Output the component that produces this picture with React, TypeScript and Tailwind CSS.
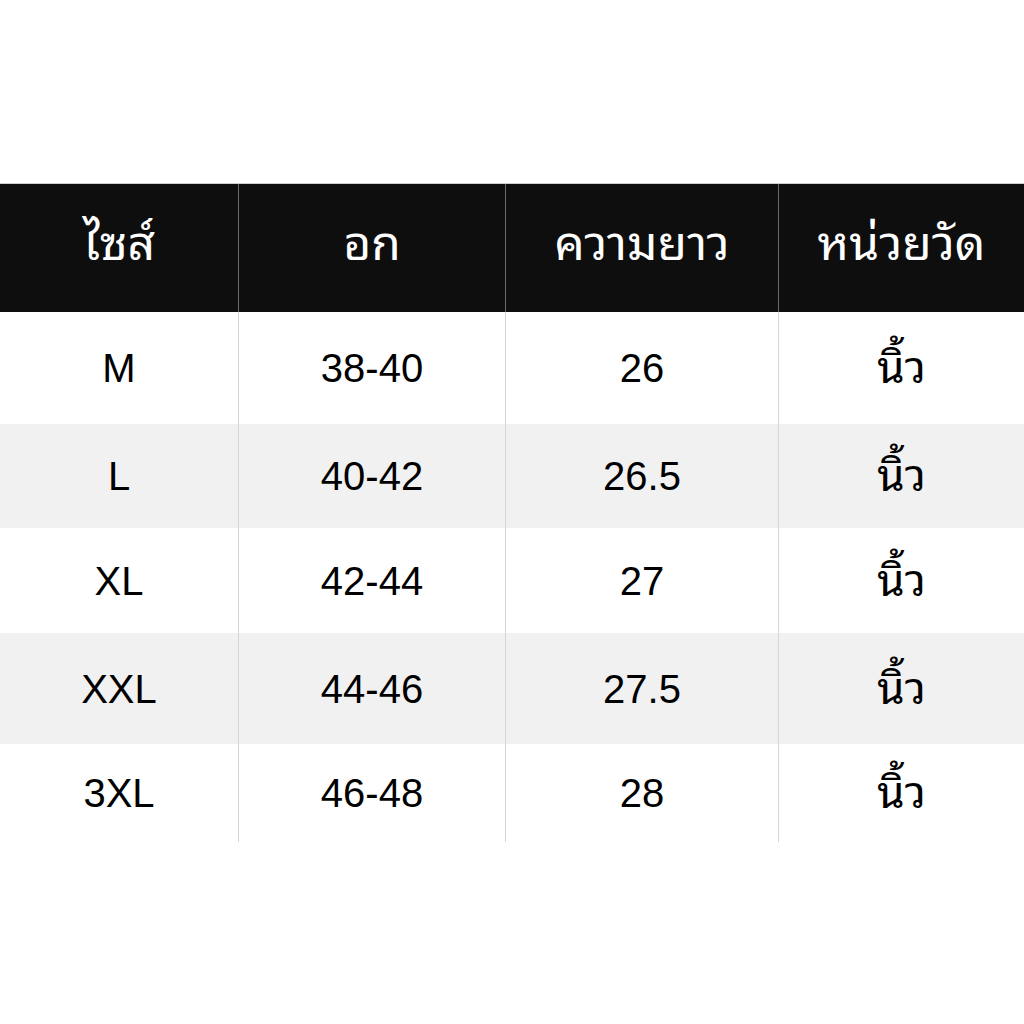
import React from "react";

const rows = [
  { size: "M", chest: "38-40", len: "26", h: "h-[112px]", bg: "bg-white" },
  { size: "L", chest: "40-42", len: "26.5", h: "h-[104px]", bg: "bg-[#f1f1f1]" },
  { size: "XL", chest: "42-44", len: "27", h: "h-[105px]", bg: "bg-white" },
  { size: "XXL", chest: "44-46", len: "27.5", h: "h-[111px]", bg: "bg-[#f1f1f1]" },
  { size: "3XL", chest: "46-48", len: "28", h: "h-[98px]", bg: "bg-white" },
];

const font = "font-['Liberation_Sans','Noto_Sans_Thai_Looped',Tahoma,'Noto_Sans_Thai',Garuda,Loma,sans-serif]";

export default function App() {
  return (
    <div className={`w-[1024px] h-[1024px] bg-white ${font}`}>
      <div className="h-[183px]" />
      <div className="grid grid-cols-[238px_267px_273px_246px] h-[129px] bg-[#0e0e0e] border-t border-[#cfcfcf] text-white text-[48px] leading-none">
        <div className="flex items-center justify-center pb-[8px]">ไซส์</div>
        <div className="flex items-center justify-center pb-[8px] border-l border-[#6a6a6a]">อก</div>
        <div className="flex items-center justify-center pb-[8px] border-l border-[#6a6a6a]">ความยาว</div>
        <div className="flex items-center justify-center pb-[8px] border-l border-[#6a6a6a]">หน่วยวัด</div>
      </div>
      {rows.map((r) => (
        <div
          key={r.size}
          className={`grid grid-cols-[238px_267px_273px_246px] ${r.h} ${r.bg} text-black text-[40px]`}
        >
          <div className="flex items-center justify-center">{r.size}</div>
          <div className="flex items-center justify-center border-l border-[#d6d6d6]">{r.chest}</div>
          <div className="flex items-center justify-center border-l border-[#d6d6d6]">{r.len}</div>
          <div className="flex items-center justify-center border-l border-[#d6d6d6] text-[44px]">นิ้ว</div>
        </div>
      ))}
    </div>
  );
}
